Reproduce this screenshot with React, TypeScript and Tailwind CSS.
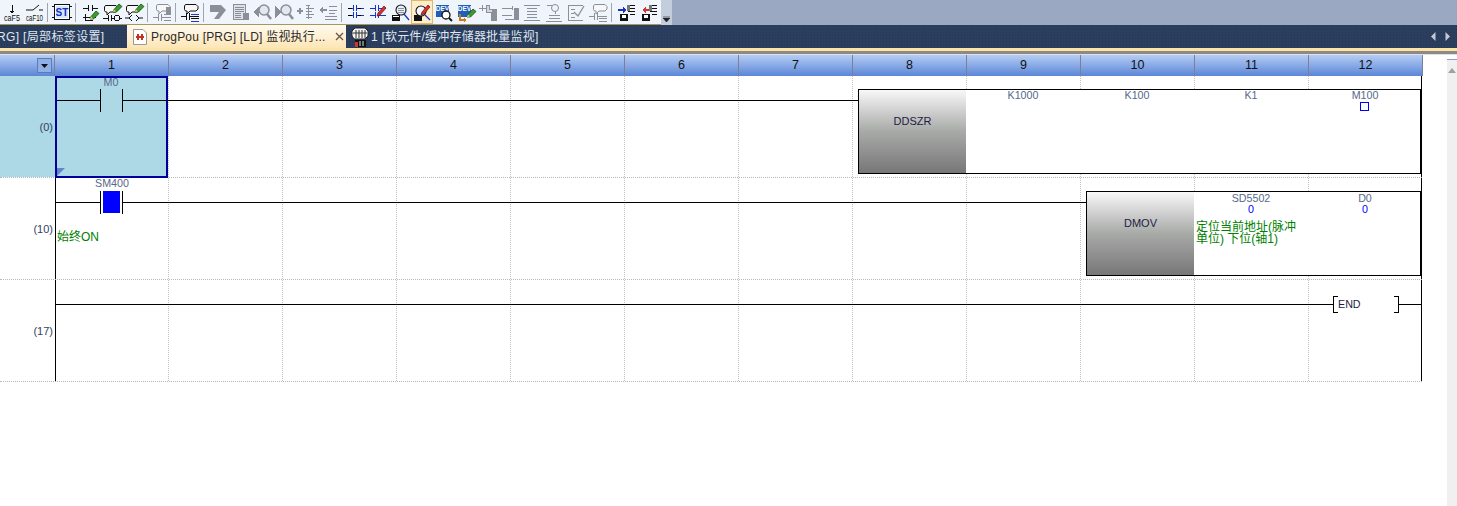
import type { ReactNode } from 'react';

const FONT = '[font-family:"Liberation_Sans","Noto_Sans_CJK_SC",sans-serif]';

const columns = ['1', '2', '3', '4', '5', '6', '7', '8', '9', '10', '11', '12'];

const K = '#111';
const G = '#8a8f98';
const B = '#1a3fc0';

function Ico({ children, w = 22 }: { children: ReactNode; w?: number }) {
  return (
    <svg width={w} height={22} viewBox={`0 0 ${w} 22`} fill="none" shapeRendering="crispEdges" className="shrink-0">
      {children}
    </svg>
  );
}

function Pencil({ x, y }: { x: number; y: number }) {
  return (
    <g transform={`translate(${x} ${y})`} shapeRendering="auto">
      <path d="M0 8 L1 5.500 L6 0 L9 2.500 L3.500 8 Z" fill="#3c9a2e" stroke="#14501a" strokeWidth=".8" />
      <path d="M0 8 L1 5.500 L3 7.500 Z" fill="#f2d27a" />
    </g>
  );
}

function Bubble({ x, y, c = K }: { x: number; y: number; c?: string }) {
  return (
    <g transform={`translate(${x} ${y})`} shapeRendering="auto">
      <path d="M1.500 .5 H12 L14 2.500 V5 L12 7 H6 L3 10 V7 H1.500 L.5 5.500 V2 Z" fill="#f7f7f7" stroke={c} />
    </g>
  );
}

function Rungs({ c = K }: { c?: string }) {
  return <path d="M3 7H8M8 4V10M11 4V10M11 7H19M3 14H8M8 11V17M11 11V17M11 14H19" stroke={c} />;
}

const icons: Record<string, ReactNode> = {
  caF5: (
    <Ico>
      <path d="M11 4V12M9 10H13M10 11H12" stroke={K} />
      <text x="3" y="20" textLength="16" lengthAdjust="spacingAndGlyphs" fontSize="9.500" fill={K} fontFamily="Liberation Sans">caF5</text>
    </Ico>
  ),
  caF10: (
    <Ico>
      <path d="M3 9H10L16 4M16 9H20" stroke={K} shapeRendering="auto" />
      <text x="3" y="20" textLength="17" lengthAdjust="spacingAndGlyphs" fontSize="9.500" fill={K} fontFamily="Liberation Sans">caF10</text>
    </Ico>
  ),
  st: (
    <Ico>
      <path d="M1 5H3M1 16H3M19 5H21M19 16H21" stroke={K} />
      <rect x="3.500" y="3.500" width="15" height="15" stroke={K} fill="#fff" />
      <rect x="5" y="5" width="12" height="12" fill="#d8e6fb" />
      <text x="11" y="15" textAnchor="middle" fontSize="10" fontWeight="700" fill="#1030c8" fontFamily="Liberation Sans">ST</text>
    </Ico>
  ),
  ladderPen: (
    <Ico>
      <path d="M9 4V10M13 4V10M4 7H9M13 7H19M4 16H17M6 13V19H14" stroke={K} />
      <Pencil x={11} y={10} />
    </Ico>
  ),
  bubblePenA: (
    <Ico>
      <Bubble x={3} y={4} />
      <Pencil x={12} y={3} />
      <path d="M2 17H7M7 14V20M10 14V20M10 17H13M19 17H21" stroke={K} />
      <rect x="13.500" y="14.500" width="5" height="5" rx="2" stroke={K} />
    </Ico>
  ),
  bubblePenB: (
    <Ico>
      <Bubble x={3} y={4} />
      <Pencil x={12} y={3} />
      <path d="M2 17H6M9 14L6 17L9 20M13 14L16 17L13 20M16 17H20" stroke={K} shapeRendering="auto" />
    </Ico>
  ),
  bubbleGrid: (
    <Ico>
      <Bubble x={5} y={3} c={G} />
      <path d="M2 16H7M7 13V20M10 13V20M10 16H20M13 19H20M13 13H20" stroke={G} />
      <rect x="15" y="6" width="5" height="7" fill={G} />
    </Ico>
  ),
  bubbleBlue: (
    <Ico>
      <Bubble x={5} y={3} />
      <path d="M2 15H7M7 12V19M10 12V19M10 15H20M12 17H20" stroke={K} />
      <path d="M12 20H20M12 13H20" stroke={B} />
    </Ico>
  ),
  jump: (
    <Ico>
      <path d="M3 4H14L19 9L12 18H7L12 11H3Z" fill={G} shapeRendering="auto" />
    </Ico>
  ),
  doc: (
    <Ico>
      <path d="M4.500 3.500H16.500V18.500H4.500Z" stroke={G} fill="#dde0e6" />
      <path d="M6 6H15M6 8H15M6 10H15M6 12H12M6 14H12M6 16H12" stroke={G} />
      <path d="M14 12H20V19H14Z" fill={G} />
    </Ico>
  ),
  leftFind: (
    <Ico>
      <path d="M2 11L8 5V17Z" fill={G} />
      <circle cx="13" cy="9" r="5" fill="#e4e7ec" stroke={G} strokeWidth="1.500" shapeRendering="auto" />
      <path d="M16 13L20 18" stroke={G} strokeWidth="2.500" shapeRendering="auto" />
    </Ico>
  ),
  rightFind: (
    <Ico>
      <path d="M8 11L2 5V17Z" fill={G} />
      <circle cx="13" cy="9" r="5" fill="#e4e7ec" stroke={G} strokeWidth="1.500" shapeRendering="auto" />
      <path d="M16 13L20 18" stroke={G} strokeWidth="2.500" shapeRendering="auto" />
    </Ico>
  ),
  indentR: (
    <Ico>
      <path d="M2 10H8M5 7V13" stroke={G} strokeWidth="2" />
      <path d="M11 4H15M13 4V18M11 7H19M11 10H17M11 13H19M11 16H17" stroke={G} />
    </Ico>
  ),
  indentL: (
    <Ico>
      <path d="M2 9L6 6V8H10V10H6V12Z" fill={G} />
      <path d="M12 5H20M12 9H20M12 12H18M8 15H20M8 18H20" stroke={G} />
    </Ico>
  ),
  rungBlue: (
    <Ico>
      <Rungs c="#1834c8" />
      <path d="M3 7H7M3 14H7M13 7H16M13 14H16" stroke="#000" />
    </Ico>
  ),
  rungPen: (
    <Ico>
      <Rungs c="#1834c8" />
      <path d="M11 12L17 5L19 7L13 14L10 15Z" fill="#d8332a" stroke="#611" strokeWidth=".7" shapeRendering="auto" />
    </Ico>
  ),
  monitor: (
    <Ico>
      <rect x="3" y="14" width="8" height="6" fill={K} />
      <path d="M4 15H10" stroke="#fff" />
      <circle cx="12" cy="9" r="5" fill="#e8eefc" stroke={K} strokeWidth="1.100" shapeRendering="auto" />
      <path d="M9 7H15M9 9H15M9 11H15" stroke={G} />
      <path d="M15 13L20 19" stroke="#1834c8" strokeWidth="1.300" shapeRendering="auto" />
    </Ico>
  ),
  monitorPen: (
    <Ico>
      <rect x="3" y="14" width="8" height="6" fill={K} />
      <circle cx="10" cy="10" r="5" fill="#f4f7ff" stroke={K} strokeWidth="1.100" shapeRendering="auto" />
      <path d="M14 14L19 19" stroke="#1834c8" strokeWidth="1.300" shapeRendering="auto" />
      <path d="M11 11L17 4L19 6L13 13L10 14Z" fill="#d8332a" stroke="#611" strokeWidth=".7" shapeRendering="auto" />
    </Ico>
  ),
  devFind: (
    <Ico>
      <rect x="3" y="4" width="13" height="12" fill="#1f5fb8" />
      <text x="9.500" y="10" textAnchor="middle" fontSize="6.500" fontWeight="700" fill="#fff" fontFamily="Liberation Sans">DEV</text>
      <circle cx="13" cy="14" r="4" fill="#fff" stroke={K} strokeWidth="1.300" shapeRendering="auto" />
      <path d="M16 17L19 20" stroke={K} strokeWidth="1.800" shapeRendering="auto" />
    </Ico>
  ),
  devPen: (
    <Ico>
      <rect x="3" y="4" width="13" height="12" fill="#1f5fb8" />
      <text x="9.500" y="10" textAnchor="middle" fontSize="6.500" fontWeight="700" fill="#fff" fontFamily="Liberation Sans">DEV</text>
      <path d="M5 13V19H11M9 17L11 19L9 21" stroke="#d0781a" strokeWidth="1.300" />
      <Pencil x={12} y={8} />
    </Ico>
  ),
  contactIn: (
    <Ico>
      <path d="M2 7H9M5 4V10" stroke={G} />
      <path d="M9 4H12V8H19V19H14V11H9Z" fill="#d4d7dc" stroke={G} />
      <rect x="15" y="8" width="5" height="11" fill={G} />
    </Ico>
  ),
  contactOut: (
    <Ico>
      <path d="M3 7H13M13 5V9M3 14H13" stroke={G} />
      <rect x="15" y="7" width="5" height="12" fill={G} />
      <path d="M6 18H15" stroke={G} />
    </Ico>
  ),
  lines: (
    <Ico>
      <path d="M3 4H19M6 7H16M6 10H16M6 13H16M6 16H16M3 19H19" stroke={G} />
    </Ico>
  ),
  note: (
    <Ico>
      <circle cx="12" cy="7" r="3.500" stroke={G} shapeRendering="auto" />
      <path d="M4 4H9M6 14H17M6 17H17M3 20H19M12 11V13" stroke={G} />
    </Ico>
  ),
  check: (
    <Ico>
      <path d="M3 4H18M3 4V19H18M6 8H10M6 12H9M6 16H10" stroke={G} />
      <path d="M9 11L13 15L19 5" stroke={G} strokeWidth="1.300" shapeRendering="auto" />
    </Ico>
  ),
  bubbleGray: (
    <Ico>
      <Bubble x={6} y={3} c={G} />
      <path d="M2 15H7M7 12V19M10 12V19M10 15H20M12 17H20M12 20H20" stroke={G} />
    </Ico>
  ),
  blockBlue: (
    <Ico>
      <rect x="5" y="13" width="8" height="7" fill={K} />
      <rect x="7" y="14" width="4" height="3" fill="#fff" />
      <path d="M3 8H8V5L11 9L8 13V10H3Z" fill="#1834c8" />
      <path d="M13 4H20M13 7H20M13 10H20M15 13H20" stroke={K} />
      <rect x="12" y="4" width="3" height="6" fill="#777" />
    </Ico>
  ),
  blockRed: (
    <Ico>
      <rect x="5" y="13" width="8" height="7" fill={K} />
      <rect x="7" y="14" width="4" height="3" fill="#fff" />
      <path d="M13 8H9V5L5 9L9 13V10H13Z" fill="#d8332a" />
      <path d="M13 4H20M13 7H20M13 10H20M15 13H20" stroke={K} />
      <rect x="12" y="4" width="3" height="6" fill="#777" />
    </Ico>
  ),
};

const toolbarGroups: string[][] = [
  ['caF5', 'caF10'],
  ['st'],
  ['ladderPen', 'bubblePenA', 'bubblePenB'],
  ['bubbleGrid'],
  ['bubbleBlue'],
  ['jump', 'doc', 'leftFind', 'rightFind', 'indentR', 'indentL'],
  ['rungBlue', 'rungPen', 'monitor', 'monitorPen', 'devFind', 'devPen', 'contactIn', 'contactOut', 'lines', 'note', 'check', 'bubbleGray'],
  ['blockBlue', 'blockRed'],
];

function Toolbar() {
  return (
    <div className="flex h-[25px] shrink-0 bg-[#9aa9c1]">
      <div className="flex h-[25px] w-[661px] items-start border-b border-[#a8965a] bg-[#f0f4fb] pl-px">
        {toolbarGroups.map((group, i) => (
          <div key={i} className="flex items-start">
            {i > 0 && <div className="mt-[3px] mr-[3px] ml-[2px] h-[19px] w-px bg-[#a0a4ac]" />}
            {group.map((name) => (
              <div
                key={name}
                className={`flex h-[24px] w-[22px] items-center justify-center ${
                  name === 'monitorPen' ? 'border border-[#e2b868] bg-[#fdeecb]' : ''
                }`}
              >
                {icons[name]}
              </div>
            ))}
          </div>
        ))}
      </div>
      <div className="flex h-[25px] w-[11px] items-end justify-center bg-[#c3cddc] pb-[3px]">
        <svg width="7" height="6" viewBox="0 0 7 6">
          <path d="M0 0H7M0 2H7L3.500 6Z" stroke="#222" strokeWidth=".6" fill="#222" />
        </svg>
      </div>
    </div>
  );
}

function TabStrip() {
  return (
    <div className={`${FONT} flex h-[23px] shrink-0 items-center overflow-hidden bg-[#2c3e5e] bg-[radial-gradient(#263755_1px,transparent_1px)] bg-[length:3px_3px] text-[12px] text-[#dfe6f2]`}>
      <div className="ml-[-3px] w-[130px] shrink-0 whitespace-nowrap tracking-[.35px]">RG] [局部标签设置]</div>
      <div className="flex h-full w-[219px] shrink-0 items-center bg-gradient-to-b from-[#fffaf0] to-[#fde6b4] pl-[6px] text-[#2a2a2a]">
        <svg width="14" height="16" viewBox="0 0 14 16" className="mr-[4px] shrink-0">
          <path d="M.5 .5H10L13.500 4V15.500H.5Z" fill="#fff" stroke="#999" />
          <path d="M3 8H11M5 5V11M9 5V11" stroke="#c8301c" strokeWidth="2" />
        </svg>
        <span className="tracking-[.2px] whitespace-nowrap">ProgPou [PRG] [LD] 监视执行...</span>
        <svg width="9" height="9" viewBox="0 0 9 9" className="ml-[9px] shrink-0">
          <path d="M1 1L8 8M8 1L1 8" stroke="#6a5a48" strokeWidth="1.400" />
        </svg>
      </div>
      <svg width="18" height="20" viewBox="0 0 18 20" className="ml-[5px] shrink-0">
        <path d="M4 1H14L17 4V9L14 12H3L1 9V4Z" fill="#f4f4f4" stroke="#222" />
        <path d="M5 3V11M8 3V11M11 3V11M14 3V11M2 6H16" stroke="#333" />
        <rect x="4" y="13" width="11" height="7" fill="#111" />
        <rect x="4" y="15" width="3" height="5" fill="#d8332a" />
        <path d="M9 14V19M12 14V19" stroke="#ddd" />
      </svg>
      <span className="ml-[2px] tracking-[.2px] whitespace-nowrap">1 [软元件/缓冲存储器批量监视]</span>
      <div className="ml-auto flex items-center gap-[9px] pr-[7px]">
        <svg width="5" height="9" viewBox="0 0 5 9"><path d="M4.500 0V9L0 4.500Z" fill="#c2c9d6" /></svg>
        <svg width="5" height="9" viewBox="0 0 5 9"><path d="M.5 0V9L5 4.500Z" fill="#c2c9d6" /></svg>
      </div>
    </div>
  );
}

function HeaderRow() {
  return (
    <div className={`${FONT} flex h-[21px] shrink-0 text-[12.500px] text-[#111]`}>
      <div className="flex h-full w-[55px] shrink-0 items-center justify-end border-r border-[#7b7f9c] bg-gradient-to-b from-[#b6cdf4] to-[#5b86d6] pr-[2px]">
        <div className="flex h-[15px] w-[15px] items-center justify-center border border-[#5c7cb8] bg-[#8fb0e6]">
          <svg width="7" height="4" viewBox="0 0 7 4"><path d="M0 0H7L3.500 4Z" fill="#111" /></svg>
        </div>
      </div>
      {columns.map((c) => (
        <div
          key={c}
          className="flex h-full w-[114px] items-center justify-center border-r border-[#7b7f9c] bg-gradient-to-b from-[#b6cdf4] to-[#5b86d6]"
        >
          {c}
        </div>
      ))}
    </div>
  );
}

function Device({ name, value, center, top }: { name: string; value?: string; center: number; top: number }) {
  return (
    <div className="absolute flex w-[100px] flex-col items-center leading-[11px]" style={{ left: center - 50, top }}>
      <span className="text-[10.700px] text-[#56688a]">{name}</span>
      {value && <span className="text-[10.700px] leading-[11px] text-[#0000ff]">{value}</span>}
    </div>
  );
}

function InstructionBox({ name, left, width, top }: { name: string; left: number; width: number; top: number }) {
  return (
    <div className="absolute flex h-[85px] border border-r-2 border-black bg-white" style={{ left, width, top }}>
      <div className="flex h-full w-[107px] shrink-0 items-start justify-center bg-gradient-to-b from-[#f8f8f8] via-[#a8aaa8] to-[#777] pt-[24px] text-[11px] leading-[14px] text-[#1c1c44]">
        {name}
      </div>
    </div>
  );
}

function LadderRow({ step, selected, children }: { step: string; selected?: boolean; children?: ReactNode }) {
  return (
    <div className={`${FONT} relative flex h-[102px] shrink-0 border-b border-dotted border-[#b8b8b8]`}>
      <div
        className={`flex h-full w-[55px] shrink-0 items-center justify-end pt-[2px] pr-[2px] text-[11px] text-[#33415f] ${
          selected ? 'bg-[#add8e6]' : ''
        }`}
      >
        {step}
      </div>
      <div className="grid grid-cols-[113px_repeat(11,114px)] border-l border-black">
        {columns.map((c) => (
          <div key={c} className="h-full border-r border-dotted border-[#c0c0c0]" />
        ))}
      </div>
      <div className="absolute inset-0">
        <div className="absolute top-0 left-[1421px] h-full w-px bg-black" />
        {children}
      </div>
    </div>
  );
}

function Wire({ from, to, y }: { from: number; to: number; y: number }) {
  return <div className="absolute h-px bg-black" style={{ left: from, width: to - from, top: y }} />;
}

function Contact({ energized }: { energized?: boolean }) {
  return (
    <>
      <div className="absolute top-[13px] left-[100px] h-[23px] w-px bg-black" />
      <div className="absolute top-[13px] left-[122px] h-[23px] w-px bg-black" />
      {energized && <div className="absolute top-[13px] left-[103px] h-[22px] w-[17px] bg-[#0000ff]" />}
    </>
  );
}

function Ladder() {
  return (
    <div className="relative w-[1422px] overflow-hidden">
      <LadderRow step="(0)" selected>
        <div className="absolute top-0 left-[55px] h-[102px] w-[113px] border-2 border-[#00009c] bg-[#add8e6]">
          <div className="absolute bottom-0 left-0 h-[8px] w-[8px] bg-[#5f86c8] [clip-path:polygon(0_0,100%_0,0_100%)]" />
        </div>
        <Device name="M0" center={111} top={1} />
        <Wire from={57} to={100} y={24} />
        <Wire from={122} to={858} y={24} />
        <Contact />
        <InstructionBox name="DDSZR" left={858} width={564} top={13} />
        <Device name="K1000" center={1023} top={14} />
        <Device name="K100" center={1137} top={14} />
        <Device name="K1" center={1251} top={14} />
        <Device name="M100" center={1365} top={14} />
        <div className="absolute top-[26px] left-[1360px] h-[9px] w-[9px] border border-[#0000ff]" />
      </LadderRow>
      <LadderRow step="(10)">
        <Device name="SM400" center={112} top={0} />
        <Wire from={56} to={100} y={24} />
        <Wire from={122} to={1086} y={24} />
        <Contact energized />
        <div className="absolute top-[52px] left-[57px] text-[12px] leading-[14px] text-[#008000]">始终ON</div>
        <InstructionBox name="DMOV" left={1086} width={336} top={13} />
        <Device name="SD5502" center={1251} top={15} value="0" />
        <Device name="D0" center={1365} top={15} value="0" />
        <div className="absolute top-[43px] left-[1196px] w-[110px] text-[12px] leading-[12px] text-[#008000]">
          定位当前地址(脉冲单位) 下位(轴1)
        </div>
      </LadderRow>
      <LadderRow step="(17)">
        <Wire from={56} to={1333} y={24} />
        <div className="absolute top-[16px] left-[1333px] h-[17px] w-[5px] border-y border-l border-black" />
        <div className="absolute top-[17px] left-[1338px] text-[10.700px] leading-[14px] text-[#1c1c44]">END</div>
        <div className="absolute top-[16px] left-[1394px] h-[17px] w-[5px] border-y border-r border-black" />
        <Wire from={1398} to={1421} y={24} />
      </LadderRow>
    </div>
  );
}

export default function App() {
  return (
    <div className="relative flex h-[506px] w-[1457px] flex-col overflow-hidden bg-white">
      <Toolbar />
      <TabStrip />
      <div className="h-[3px] shrink-0 bg-[#fde3a4]" />
      <div className="h-[3px] shrink-0 bg-[#8a8a8a]" />
      <div className="h-px shrink-0 bg-[#e0e0e0]" />
      <div className="flex min-h-0 flex-1">
        <div className="w-[1447px] shrink-0">
          <HeaderRow />
          <Ladder />
        </div>
        <div className="flex w-[10px] shrink-0 flex-col bg-[#f0f0f0]">
          <div className="h-[5px] border-b border-[#88a0c8] bg-white" />
          <svg width="8" height="5" viewBox="0 0 8 5" className="mt-[8px] ml-px"><path d="M4 0L8 5H0Z" fill="#a0a0a0" /></svg>
        </div>
      </div>
    </div>
  );
}
